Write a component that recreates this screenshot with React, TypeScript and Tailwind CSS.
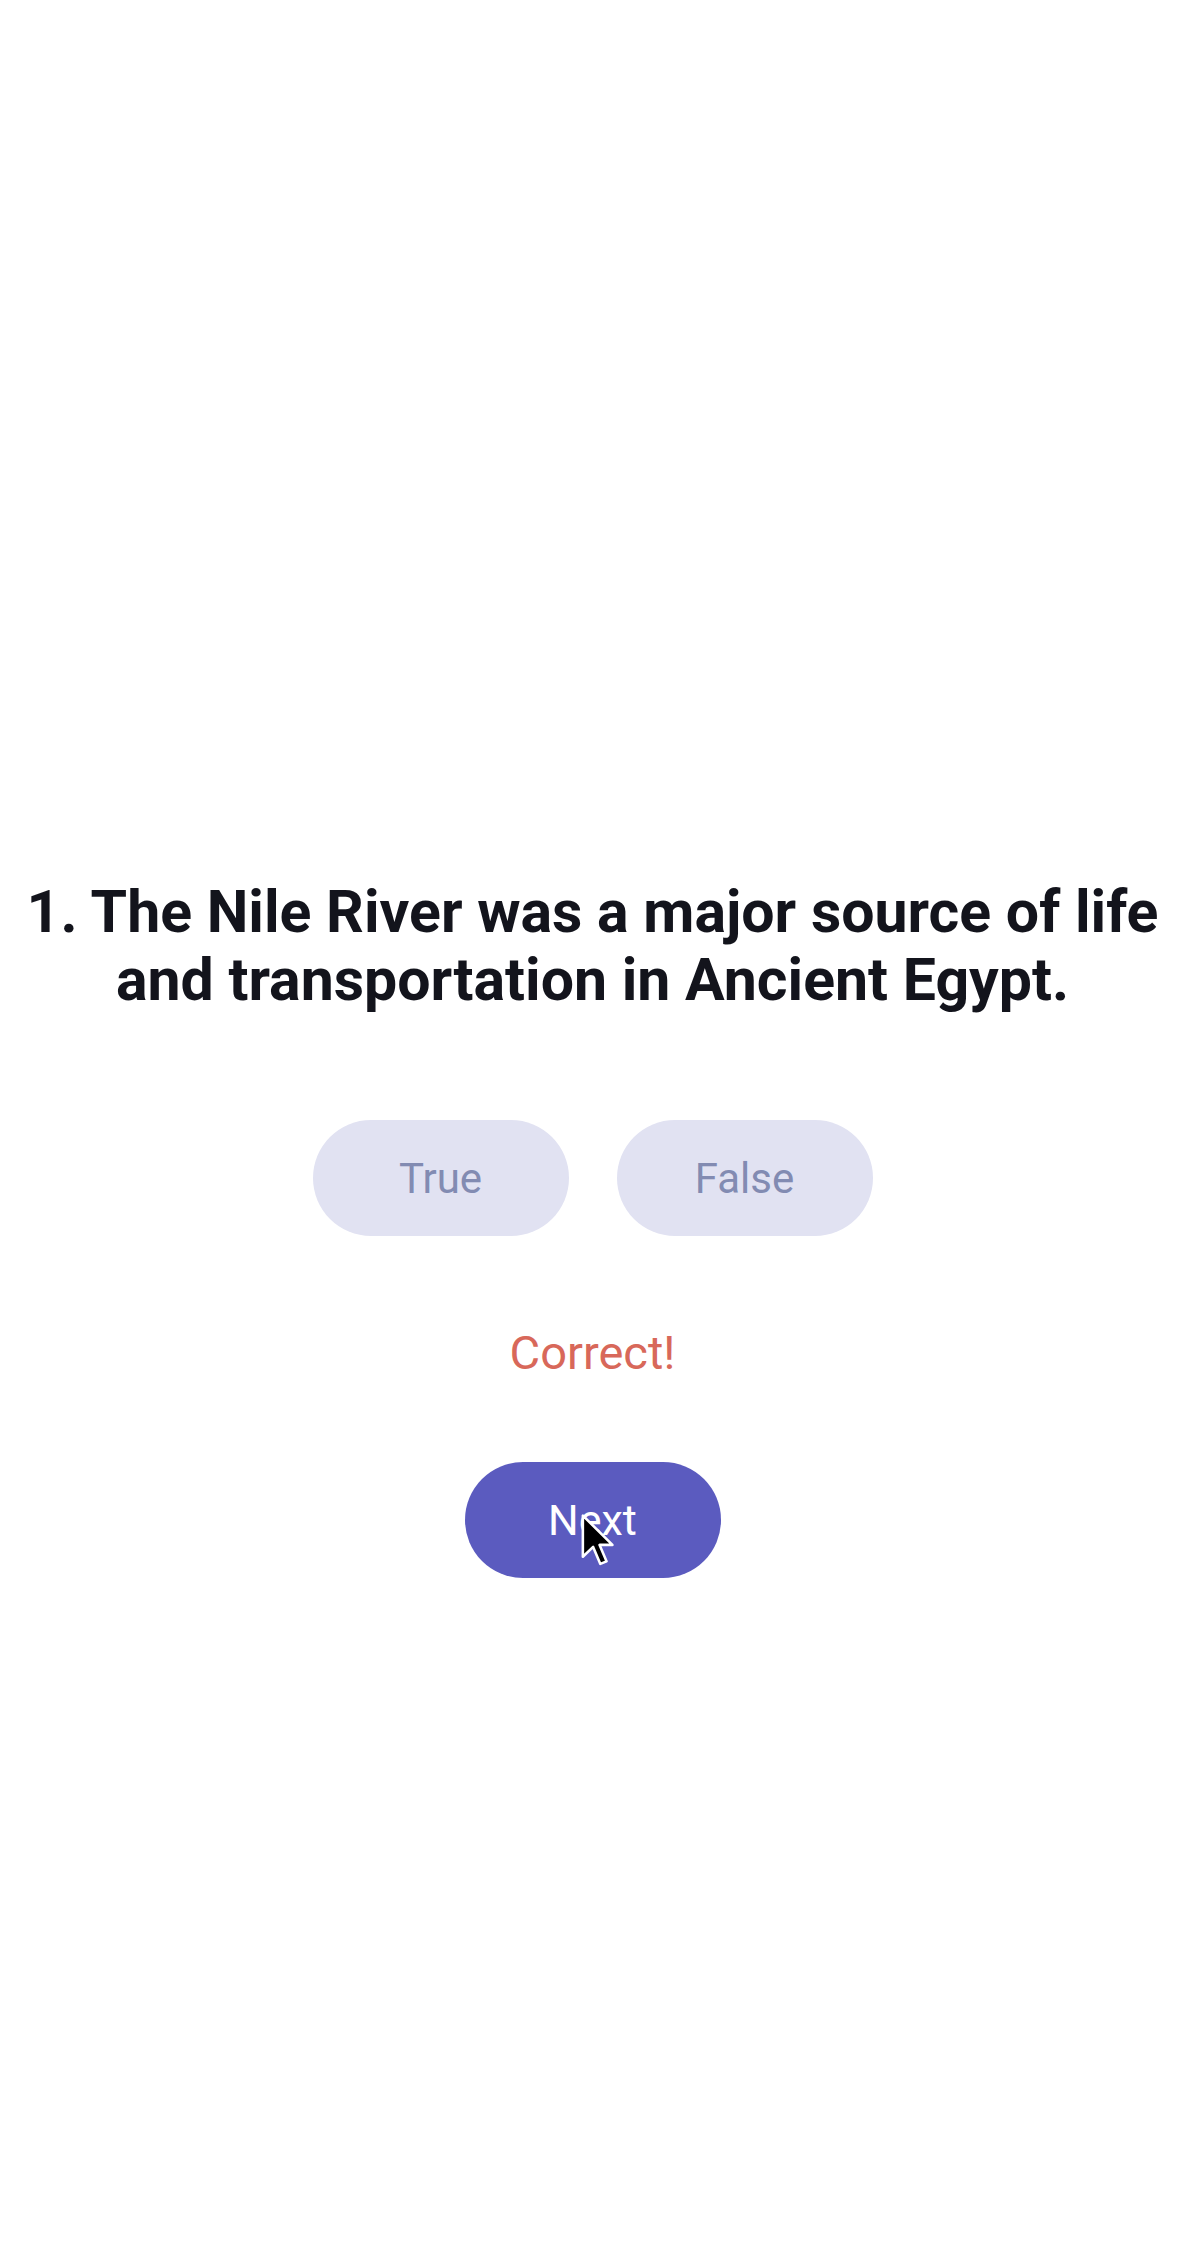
import React from "react";

const Cursor = () => (
    <svg
        className="absolute left-[115px] top-[51px]"
        width="34"
        height="54"
        viewBox="-1 -1 13 21"
        aria-hidden="true"
    >
        <path
            d="M0 0 L0 16 L4 12.2 L6.8 18.8 L9.2 17.8 L6.5 11.4 L11.5 11.4 Z"
            fill="#000"
            stroke="#fff"
            strokeWidth="1"
            strokeLinejoin="round"
        />
    </svg>
);

const App = () => {
    return (
        <main className="min-h-screen bg-white flex flex-col items-center pt-[878px] pl-[6px] font-['Roboto',sans-serif]">
            <h1 className="text-[59px] leading-[68px] font-bold text-center text-[#13141c] whitespace-nowrap">
                1. The Nile River was a major source of life
                <br />
                and transportation in Ancient Egypt.
            </h1>

            <div className="flex gap-[48px] mt-[106px]">
                <button className="w-[256px] h-[116px] rounded-full bg-[#e1e2f2] text-[#828bb2] text-[42px]">
                    True
                </button>
                <button className="w-[256px] h-[116px] rounded-full bg-[#e1e2f2] text-[#828bb2] text-[42px]">
                    False
                </button>
            </div>

            <p className="mt-[90px] text-[47px] leading-[54px] text-[#d8685a]">Correct!</p>

            <button className="relative mt-[82px] w-[256px] h-[116px] rounded-full bg-[#5b5bbf] text-white text-[43px]">
                Next
                <Cursor />
            </button>
        </main>
    );
};

export default App;
